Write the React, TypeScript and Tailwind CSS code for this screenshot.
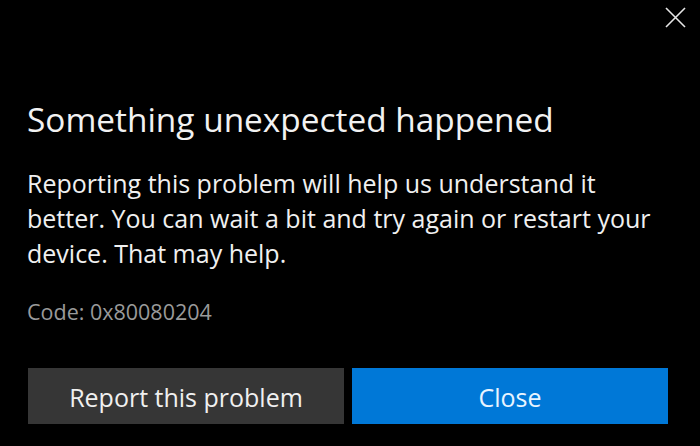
import React from "react";

const CloseIcon = () => (
  <svg width="21" height="21" viewBox="0 0 21 21" fill="none">
    <path d="M1 1L20 20M20 1L1 20" stroke="#e6e6e6" strokeWidth="1.6" />
  </svg>
);

export default function App() {
  return (
    <div
      className="w-[700px] h-[446px] bg-black text-white flex flex-col overflow-hidden"
      style={{ fontFamily: '"Open Sans", "Noto Sans", sans-serif' }}
    >
      <div className="h-[28px] pt-[7px] pr-[14px] flex justify-end">
        <CloseIcon />
      </div>

      <div className="px-[27px]">
        <h1 className="mt-[69px] text-[33.4px] leading-[44px] font-normal text-[#f2f2f2] whitespace-nowrap">
          Something unexpected happened
        </h1>
        <p className="mt-[25px] text-[25px] leading-[35px] text-[#f0f0f0] whitespace-nowrap">
          Reporting this problem will help us understand it
          <br />
          better. You can wait a bit and try again or restart your
          <br />
          device. That may help.
        </p>
        <p className="mt-[27px] text-[21.5px] leading-[28px] text-[#9a9a9a]">
          Code: 0x80080204
        </p>
      </div>

      <div className="mt-[42px] ml-[28px] w-[640px] flex gap-[8px]">
        <button className="flex-1 h-[56px] pt-[3px] bg-[#363636] text-[25px] text-[#f0f0f0] flex items-center justify-center">
          Report this problem
        </button>
        <button className="flex-1 h-[56px] pt-[3px] bg-[#0078d7] text-[25px] text-[#e8f4ff] flex items-center justify-center">
          Close
        </button>
      </div>
    </div>
  );
}
